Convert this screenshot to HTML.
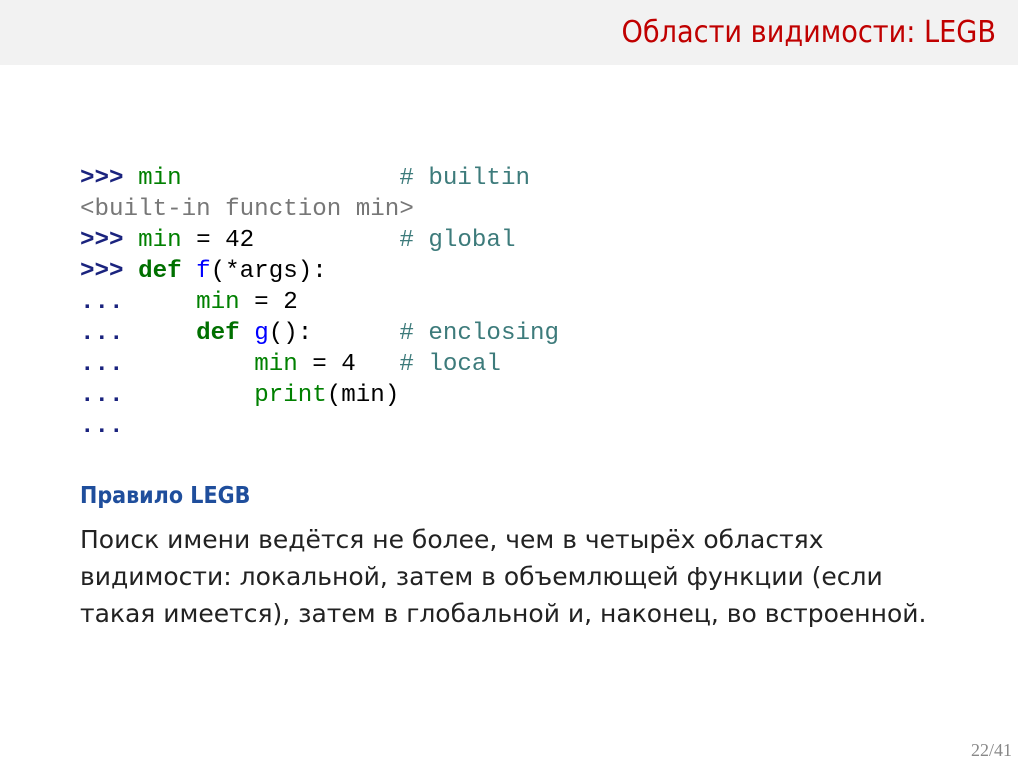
<!DOCTYPE html>
<html><head><meta charset="utf-8"><style>
body{margin:0;width:1024px;height:767px;background:#fff;position:relative;overflow:hidden;font-family:"Liberation Sans","DejaVu Sans",sans-serif}
.hdr{position:absolute;left:0;top:0;width:1018px;height:65px;background:#f2f2f2}
.hdr span{position:absolute;right:22px;top:15px;color:#c00000;font-size:30.2px;font-family:"DejaVu Sans Condensed","Liberation Sans Narrow","Liberation Sans",sans-serif}
pre{position:absolute;left:80px;top:163px;margin:0;font-family:"Liberation Mono",monospace;font-size:24.2px;line-height:31px;color:#000}
.p{color:#1a237e;font-weight:bold}.g{color:#008000}.k{color:#007000;font-weight:bold}.o{color:#777}.c{color:#3d7b7b}.f{color:#0000ff}
h3{position:absolute;left:80px;top:483px;margin:0;color:#1f4e9c;font-size:23px;font-weight:bold;font-family:"DejaVu Sans Condensed","Liberation Sans",sans-serif}
.t{position:absolute;left:80px;top:521px;width:940px;font-size:25px;line-height:37px;color:#222;font-family:"DejaVu Sans","Liberation Sans",sans-serif}
.n{position:absolute;right:12px;top:740px;color:#888;font-size:18px;font-family:"Liberation Serif",serif}
</style></head><body>
<div class="hdr"><span>Области видимости: LEGB</span></div>
<pre><span class="p">&gt;&gt;&gt;</span> <span class="g">min</span>               <span class="c"># builtin</span>
<span class="o">&lt;built-in function min&gt;</span>
<span class="p">&gt;&gt;&gt;</span> <span class="g">min</span> = 42          <span class="c"># global</span>
<span class="p">&gt;&gt;&gt;</span> <span class="k">def</span> <span class="f">f</span>(*args):
<span class="p">...</span>     <span class="g">min</span> = 2
<span class="p">...</span>     <span class="k">def</span> <span class="f">g</span>():      <span class="c"># enclosing</span>
<span class="p">...</span>         <span class="g">min</span> = 4   <span class="c"># local</span>
<span class="p">...</span>         <span class="g">print</span>(min)
<span class="p">...</span></pre>
<h3>Правило LEGB</h3>
<div class="t">Поиск имени ведётся не более, чем в четырёх областях<br>видимости: локальной, затем в объемлющей функции (если<br>такая имеется), затем в глобальной и, наконец, во встроенной.</div>
<div class="n">22/41</div>
</body></html>
